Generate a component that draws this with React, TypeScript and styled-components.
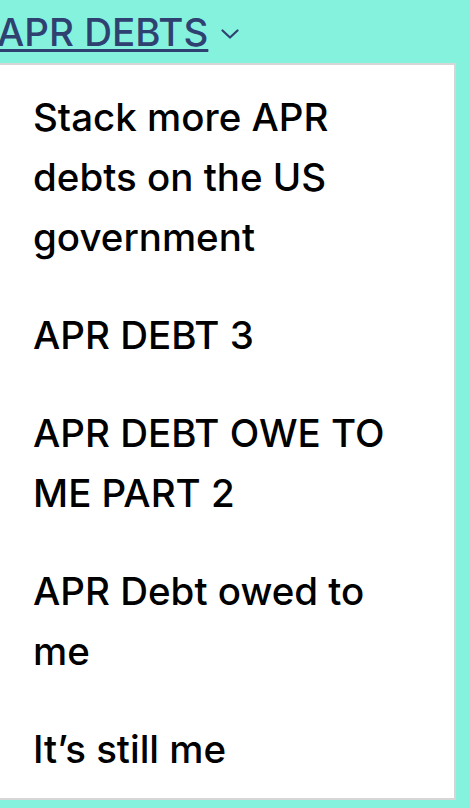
import * as React from "react";
import styled, { createGlobalStyle } from "styled-components";

const debts: string[] = [
  "Stack more APR debts on the US government",
  "APR DEBT 3",
  "APR DEBT OWE TO ME PART 2",
  "APR Debt owed to me",
  "It\u2019s still me",
];

const GlobalStyle = createGlobalStyle`
  html, body {
    margin: 0;
    padding: 0;
    background: #85f2de;
    font-family: Inter, "Noto Sans", sans-serif;
  }
`;

const Page = styled.main`
  display: flex;
  flex-direction: column;
  align-items: flex-start;
  padding-top: 8px;
  gap: 7px;
`;

const Trigger = styled.button`
  display: flex;
  align-items: center;
  gap: 13px;
  margin-left: -3px;
  padding: 0;
  border: 0;
  background: none;
  color: #2f4170;
  font-family: inherit;
  font-size: 38.5px;
  font-weight: 500;
  line-height: 48px;
  cursor: pointer;
`;

const Label = styled.span`
  text-decoration: underline;
  text-decoration-thickness: 3px;
  text-underline-offset: 3px;
`;

const Chevron = styled.svg`
  width: 18px;
  height: 10px;
  margin-top: 4px;
`;

const Menu = styled.ul`
  box-sizing: border-box;
  width: 458px;
  margin: 0 0 0 -2px;
  padding: 3px 0 0 33px;
  list-style: none;
  background: #fff;
  border: 2px solid #d6d6d6;
`;

const Item = styled.li`
  padding: 19px 40px 19px 0;
  color: #000;
  font-size: 38.5px;
  line-height: 60px;
  font-weight: 500;
`;

const App: React.FC = () => {
  return (
    <>
      <GlobalStyle />
      <Page>
        <Trigger>
          <Label>APR DEBTS</Label>
          <Chevron viewBox="0 0 18 10" fill="none">
            <polyline
              points="1.5,1.5 9,8.5 16.5,1.5"
              stroke="#2f4170"
              strokeWidth="2.2"
              strokeLinecap="round"
              strokeLinejoin="round"
            />
          </Chevron>
        </Trigger>
        <Menu>
          {debts.map((debt) => (
            <Item key={debt}>{debt}</Item>
          ))}
        </Menu>
      </Page>
    </>
  );
};

export default App;
